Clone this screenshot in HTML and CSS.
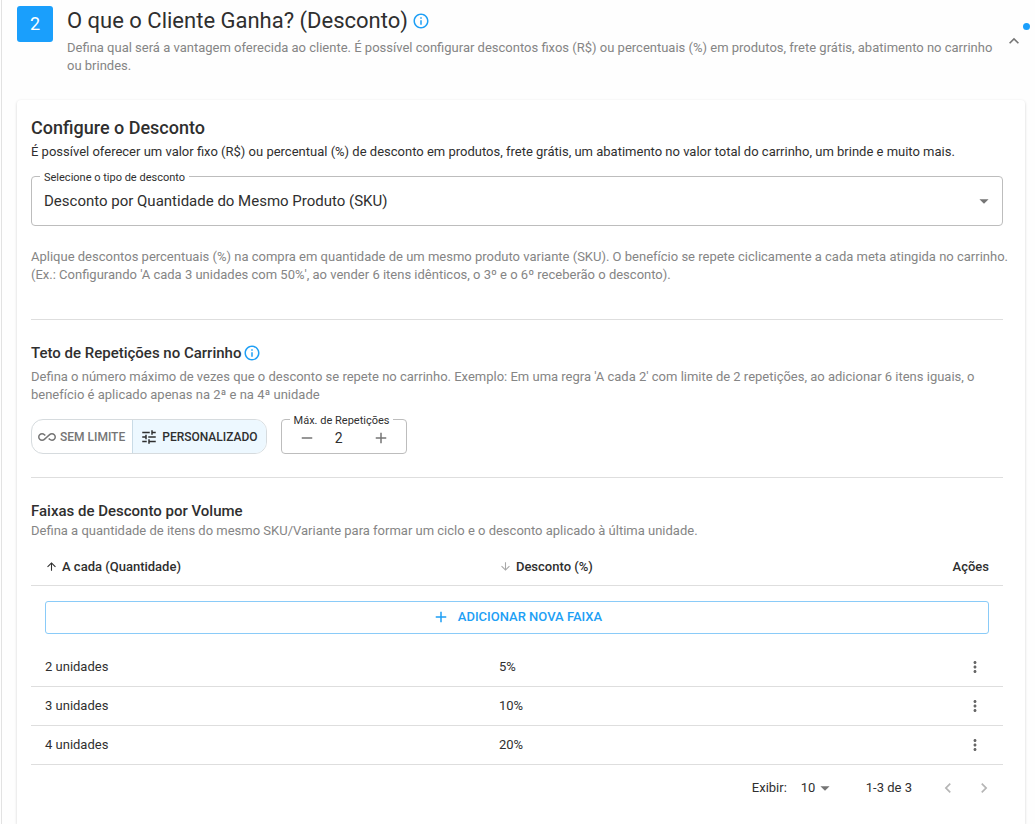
FILE: index.html
```html
<!DOCTYPE html>
<html lang="pt-BR">
<head>
    <meta charset="UTF-8">
    <meta name="viewport" content="width=device-width, initial-scale=1.0">
    <title>O que o Cliente Ganha?</title>
    <link rel="stylesheet" href="styles.css">
</head>
<body>
    <main class="page">
        <header class="step">
            <div class="step-number">2</div>
            <div class="step-text">
                <h1>O que o Cliente Ganha? (Desconto)
                    <svg class="info" viewBox="0 0 24 24"><path d="M11 7h2v2h-2zm0 4h2v6h-2zm1-9C6.48 2 2 6.48 2 12s4.480 10 10 10 10-4.480 10-10S17.520 2 12 2zm0 18c-4.410 0-8-3.590-8-8s3.590-8 8-8 8 3.590 8 8-3.590 8-8 8z"/></svg>
                </h1>
                <p class="muted">Defina qual será a vantagem oferecida ao cliente. É possível configurar descontos fixos (R$) ou percentuais (%) em produtos, frete grátis, abatimento no carrinho ou brindes.</p>
            </div>
            <button class="collapse" type="button" aria-label="Recolher">
                <svg viewBox="0 0 24 24"><path d="M12 8l-6 6 1.410 1.410L12 10.830l4.590 4.580L18 14z"/></svg>
                <span class="dot"></span>
            </button>
        </header>

        <section class="card">
            <h2>Configure o Desconto</h2>
            <p class="lead">É possível oferecer um valor fixo (R$) ou percentual (%) de desconto em produtos, frete grátis, um abatimento no valor total do carrinho, um brinde e muito mais.</p>

            <fieldset class="field type-field">
                <legend><label for="discount-type">Selecione o tipo de desconto</label></legend>
                <div class="select">
                    <select id="discount-type">
                        <option>Desconto por Quantidade do Mesmo Produto (SKU)</option>
                    </select>
                    <svg viewBox="0 0 24 24"><path d="M7 10l5 5 5-5z"/></svg>
                </div>
            </fieldset>

            <p class="muted type-help">Aplique descontos percentuais (%) na compra em quantidade de um mesmo produto variante (SKU). O benefício se repete ciclicamente a cada meta atingida no carrinho. (Ex.: Configurando 'A cada 3 unidades com 50%', ao vender 6 itens idênticos, o 3º e o 6º receberão o desconto).</p>

            <hr>

            <h3>Teto de Repetições no Carrinho
                <svg class="info" viewBox="0 0 24 24"><path d="M11 7h2v2h-2zm0 4h2v6h-2zm1-9C6.48 2 2 6.48 2 12s4.480 10 10 10 10-4.480 10-10S17.520 2 12 2zm0 18c-4.410 0-8-3.590-8-8s3.590-8 8-8 8 3.590 8 8-3.590 8-8 8z"/></svg>
            </h3>
            <p class="muted limit-help">Defina o número máximo de vezes que o desconto se repete no carrinho. Exemplo: Em uma regra 'A cada 2' com limite de 2 repetições, ao adicionar 6 itens iguais, o benefício é aplicado apenas na 2ª e na 4ª unidade</p>

            <div class="limit">
                <div class="toggle">
                    <button type="button" aria-pressed="false">
                        <svg viewBox="0 0 24 24"><path d="M18.600 6.620c-1.440 0-2.800.56-3.770 1.530L12 10.660 10.480 12h.01L7.800 14.390c-.64.64-1.490.99-2.400.99-1.870 0-3.390-1.510-3.390-3.380S3.530 8.620 5.400 8.620c.91 0 1.760.35 2.440 1.030l1.130 1 1.510-1.340L9.220 8.200C8.200 7.180 6.840 6.620 5.400 6.620 2.420 6.620 0 9.040 0 12s2.420 5.380 5.400 5.380c1.440 0 2.800-.56 3.770-1.530l2.830-2.500.01.01L13.520 12h-.01l2.690-2.390c.64-.64 1.490-.99 2.400-.99 1.870 0 3.390 1.510 3.390 3.380s-1.520 3.380-3.390 3.380c-.9 0-1.760-.35-2.440-1.030l-1.140-1.010-1.510 1.340 1.270 1.120c1.020 1.010 2.370 1.570 3.820 1.570 2.980 0 5.400-2.410 5.400-5.380s-2.420-5.370-5.400-5.370z"/></svg>
                        SEM LIMITE
                    </button>
                    <button class="active" type="button" aria-pressed="true">
                        <svg viewBox="0 0 24 24"><path d="M3 17v2h6v-2H3zM3 5v2h10V5H3zm10 16v-2h8v-2h-8v-2h-2v6h2zM7 9v2H3v2h4v2h2V9H7zm14 4v-2H11v2h10zm-6-4h2V7h4V5h-4V3h-2v6z"/></svg>
                        PERSONALIZADO
                    </button>
                </div>
                <fieldset class="field stepper">
                    <legend><label for="max">Máx. de Repetições</label></legend>
                    <div class="stepper-row">
                        <button type="button" aria-label="Diminuir"><svg viewBox="0 0 24 24"><path d="M19 13H5v-2h14v2z"/></svg></button>
                        <input id="max" type="text" inputmode="numeric" value="2">
                        <button type="button" aria-label="Aumentar"><svg viewBox="0 0 24 24"><path d="M19 13h-6v6h-2v-6H5v-2h6V5h2v6h6v2z"/></svg></button>
                    </div>
                </fieldset>
            </div>

            <hr>

            <h3>Faixas de Desconto por Volume</h3>
            <p class="muted ranges-help">Defina a quantidade de itens do mesmo SKU/Variante para formar um ciclo e o desconto aplicado à última unidade.</p>

            <table class="ranges">
                <thead>
                    <tr>
                        <th class="col-qty"><span class="sort"><svg viewBox="0 0 24 24"><path d="M4 12l1.410 1.410L11 7.830V20h2V7.830l5.580 5.590L20 12l-8-8-8 8z"/></svg>A cada (Quantidade)</span></th>
                        <th><span class="sort"><svg class="idle" viewBox="0 0 24 24"><path d="M20 12l-1.410-1.410L13 16.170V4h-2v12.170l-5.580-5.590L4 12l8 8 8-8z"/></svg>Desconto (%)</span></th>
                        <th class="col-actions">Ações</th>
                    </tr>
                </thead>
                <tbody>
                    <tr class="add-row">
                        <td colspan="3">
                            <button class="add" type="button">
                                <svg viewBox="0 0 24 24"><path d="M19 13h-6v6h-2v-6H5v-2h6V5h2v6h6v2z"/></svg>
                                ADICIONAR NOVA FAIXA
                            </button>
                        </td>
                    </tr>
                    <tr>
                        <td>2 unidades</td>
                        <td>5%</td>
                        <td class="col-actions"><button class="more" type="button" aria-label="Ações"><svg viewBox="0 0 24 24"><path d="M12 8c1.100 0 2-.9 2-2s-.9-2-2-2-2 .9-2 2 .9 2 2 2zm0 2c-1.100 0-2 .9-2 2s.9 2 2 2 2-.9 2-2-.9-2-2-2zm0 6c-1.100 0-2 .9-2 2s.9 2 2 2 2-.9 2-2-.9-2-2-2z"/></svg></button></td>
                    </tr>
                    <tr>
                        <td>3 unidades</td>
                        <td>10%</td>
                        <td class="col-actions"><button class="more" type="button" aria-label="Ações"><svg viewBox="0 0 24 24"><path d="M12 8c1.100 0 2-.9 2-2s-.9-2-2-2-2 .9-2 2 .9 2 2 2zm0 2c-1.100 0-2 .9-2 2s.9 2 2 2 2-.9 2-2-.9-2-2-2zm0 6c-1.100 0-2 .9-2 2s.9 2 2 2 2-.9 2-2-.9-2-2-2z"/></svg></button></td>
                    </tr>
                    <tr>
                        <td>4 unidades</td>
                        <td>20%</td>
                        <td class="col-actions"><button class="more" type="button" aria-label="Ações"><svg viewBox="0 0 24 24"><path d="M12 8c1.100 0 2-.9 2-2s-.9-2-2-2-2 .9-2 2 .9 2 2 2zm0 2c-1.100 0-2 .9-2 2s.9 2 2 2 2-.9 2-2-.9-2-2-2zm0 6c-1.100 0-2 .9-2 2s.9 2 2 2 2-.9 2-2-.9-2-2-2z"/></svg></button></td>
                    </tr>
                </tbody>
            </table>

            <div class="pager">
                <label for="page-size">Exibir:</label>
                <div class="select page-size">
                    <select id="page-size">
                        <option>10</option>
                    </select>
                    <svg viewBox="0 0 24 24"><path d="M7 10l5 5 5-5z"/></svg>
                </div>
                <span class="count">1-3 de 3</span>
                <button type="button" aria-label="Anterior" disabled><svg viewBox="0 0 24 24"><path d="M15.410 16.590L10.830 12l4.580-4.590L14 6l-6 6 6 6z"/></svg></button>
                <button type="button" aria-label="Próxima" disabled><svg viewBox="0 0 24 24"><path d="M8.590 16.590L13.170 12 8.590 7.410 10 6l6 6-6 6z"/></svg></button>
            </div>
        </section>
    </main>
</body>
</html>
```

FILE: styles.css
```css
* {
    box-sizing: border-box;
}

body {
    margin: 0;
    background-color: #fefefe;
    color: #2f2f2f;
    font-family: Roboto, "Liberation Sans", sans-serif;
    font-size: 13px;
    line-height: 18px;
}

h1, h2, h3, p {
    margin: 0;
}

button, select, input {
    font: inherit;
    color: inherit;
    background: none;
    border: none;
    margin: 0;
    padding: 0;
}

button {
    cursor: pointer;
}

svg {
    display: block;
    flex: none;
    width: 18px;
    height: 18px;
    fill: currentColor;
}

.page {
    display: flex;
    flex-direction: column;
    min-height: 100vh;
    margin-left: 1px;
    padding: 6px 10px 0 15px;
    border-left: 1px solid #e2e2e2;
}

.muted {
    color: #858585;
}

.info {
    color: #1e9ff5;
}

/* Step header */
.step {
    display: flex;
    align-items: flex-start;
    margin-bottom: 25px;
}

.step-number {
    flex: none;
    width: 36px;
    height: 36px;
    margin-right: 14px;
    border-radius: 3px;
    background-color: #1a9ffc;
    color: #fff;
    font-size: 18px;
    line-height: 36px;
    text-align: center;
}

.step-text {
    flex: 1;
}

h1 {
    display: flex;
    align-items: center;
    gap: 4px;
    padding-bottom: 4px;
    font-size: 22px;
    font-weight: 400;
    line-height: 29px;
}

.collapse {
    position: relative;
    margin-top: 25px;
    margin-left: 8px;
    padding-right: 1px;
    color: #757575;
}

.collapse svg {
    width: 20px;
    height: 20px;
}

.dot {
    position: absolute;
    top: -8px;
    right: -5px;
    width: 7px;
    height: 7px;
    border-radius: 50%;
    background-color: #1a9ffc;
}

/* Card */
.card {
    flex: 1;
    padding: 16px 22px 24px 14px;
    border-radius: 4px 4px 0 0;
    background-color: #fff;
    box-shadow: 0 1px 3px rgba(0, 0, 0, 0.18);
}

h2 {
    font-size: 18px;
    font-weight: 500;
    line-height: 24px;
}

h3 {
    display: flex;
    align-items: center;
    gap: 2px;
    font-size: 15px;
    font-weight: 500;
    line-height: 20px;
}

.lead {
    padding-top: 3px;
}

hr {
    height: 1px;
    margin: 0 0 23px;
    border: none;
    background-color: #dedede;
}

.field {
    min-width: 0;
    margin: 0;
    padding: 0;
    border: 1px solid #bdbdbd;
    border-radius: 4px;
}

.field legend {
    margin-left: 8px;
    padding: 4px 4px 0;
    font-size: 11px;
    line-height: 14px;
}

.type-field {
    margin-top: 6px;
}

.select {
    display: grid;
    align-items: center;
}

.select select,
.select svg {
    grid-area: 1 / 1;
}

.select select {
    width: 100%;
    appearance: none;
}

.select svg {
    justify-self: end;
    width: 22px;
    height: 22px;
    color: #757575;
    pointer-events: none;
}

.type-field select {
    height: 40px;
    padding: 0 36px 8px 12px;
    font-size: 15px;
}

.type-field svg {
    margin-right: 7px;
    margin-bottom: 8px;
}

/* the help text runs a little past the field above it */
.type-help {
    margin-right: -8px;
    padding: 22px 0 35px;
}

.limit-help {
    padding: 5px 0 6px;
}

/* Repetition limit */
.limit {
    display: flex;
    align-items: flex-end;
    gap: 14px;
    margin-bottom: 23px;
}

.toggle {
    display: flex;
    height: 35px;
    border: 1px solid #d6dbde;
    border-radius: 12px;
    overflow: hidden;
}

.toggle button {
    display: flex;
    align-items: center;
    gap: 4px;
    padding: 0 7px 0 6px;
    color: #757575;
    font-size: 12px;
    font-weight: 500;
}

.toggle .active {
    padding: 0 8px 0 7px;
    border-left: 1px solid #c9dbe6;
    background-color: #edf8ff;
    color: #2f2f2f;
}

.stepper {
    width: 126px;
}

.stepper-row {
    display: flex;
    align-items: center;
    justify-content: center;
    height: 25px;
    padding-bottom: 6px;
}

.stepper button {
    color: #757575;
}

.stepper input {
    width: 56px;
    padding-right: 10px;
    font-size: 14px;
    text-align: center;
}

/* Ranges table */
.ranges-help {
    padding-top: 1px;
}

.ranges {
    width: 100%;
    margin-top: 9px;
    border-collapse: collapse;
    table-layout: fixed;
}

.ranges th,
.ranges td {
    height: 39px;
    padding: 0 14px;
    border-bottom: 1px solid #dedede;
    text-align: left;
}

.ranges th {
    height: 36px;
    font-weight: 500;
}

.ranges .col-qty {
    width: 46.7%;
}

.ranges .col-actions {
    text-align: right;
}

.sort {
    display: flex;
    align-items: center;
    gap: 4px;
}

.sort svg {
    width: 13px;
    height: 13px;
}

.sort .idle {
    color: #a8a8a8;
}

.ranges .add-row td {
    padding: 15px 14px 14px;
    border-bottom: none;
}

.add {
    display: flex;
    align-items: center;
    justify-content: center;
    gap: 8px;
    width: 100%;
    height: 33px;
    border: 1px solid #8acbf8;
    border-radius: 3px;
    color: #1e9ff5;
    font-weight: 500;
}

.more {
    display: inline-block;
    padding: 0 5px;
    vertical-align: middle;
    color: #666;
}

/* Pagination */
.pager {
    display: flex;
    align-items: center;
    justify-content: flex-end;
    padding: 12px 9px 0 0;
}

.page-size {
    width: 35px;
    margin-left: 14px;
}

.count {
    margin: 0 26px 0 30px;
}

.pager button {
    color: #b5b5b5;
}

.pager button svg {
    width: 20px;
    height: 20px;
}

.pager button + button {
    margin-left: 16px;
}
```
